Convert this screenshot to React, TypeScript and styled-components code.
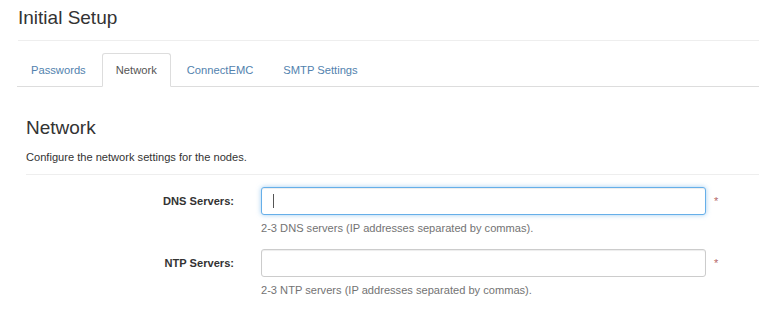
import styled, { createGlobalStyle, css } from "styled-components";

const GlobalStyle = createGlobalStyle`
  html, body {
    margin: 0;
    padding: 0;
    background: #fff;
  }
  body {
    font-family: "Liberation Sans", Arial, sans-serif;
    color: #333;
  }
`

const Page = styled.div`
  padding-left: 18px;
`

const Header = styled.div`
  padding-top: 7px;
  padding-bottom: 12px;
  border-bottom: 1px solid #eee;
`

const Title = styled.h1`
  margin: 0;
  font-size: 19px;
  line-height: 21px;
  font-weight: normal;
  color: #333;
`

const Tabs = styled.ul`
  display: flex;
  list-style: none;
  margin: 12px 0 0 -1px;
  padding: 0;
  border-bottom: 1px solid #ddd;
`

const Tab = styled.li<{ $active?: boolean }>`
  margin-right: 2px;
  margin-bottom: -1px;
  padding: 8px 13px;
  font-size: 11.2px;
  line-height: 16px;
  border: 1px solid transparent;
  border-radius: 3px 3px 0 0;
  color: #5282ae;
  ${(p) =>
    p.$active &&
    css`
      color: #555;
      background: #fff;
      border-color: #ddd #ddd transparent;
    `}
`

const Panel = styled.div`
  padding-left: 8px;
`

const Legend = styled.h2`
  margin: 30px 0 0;
  font-size: 19px;
  line-height: 21px;
  font-weight: normal;
  color: #333;
`

const Description = styled.p`
  margin: 11px 0 0;
  padding-bottom: 9px;
  font-size: 11.1px;
  line-height: 16px;
  border-bottom: 1px solid #eee;
`

const Form = styled.div`
  display: flex;
  flex-direction: column;
  gap: 13px;
  padding-top: 12px;
`

const Row = styled.div`
  display: grid;
  grid-template-columns: 208px 445px auto;
  column-gap: 27px;
  align-items: center;
`

const Label = styled.label`
  justify-self: end;
  font-size: 11.1px;
  font-weight: bold;
  color: #333;
`

const FieldWrap = styled.div<{ $focused?: boolean }>`
  position: relative;
  ${(p) =>
    p.$focused &&
    css`
      &::after {
        content: "";
        position: absolute;
        left: 12px;
        top: 7px;
        width: 1px;
        height: 14px;
        background: #555;
      }
    `}
`

const Input = styled.input<{ $focused?: boolean }>`
  display: block;
  box-sizing: border-box;
  width: 100%;
  height: 28px;
  padding: 4px 10px;
  font-family: "Liberation Sans", Arial, sans-serif;
  font-size: 11.1px;
  color: #555;
  background: #fff;
  border: 1px solid #ccc;
  border-radius: 3px;
  box-shadow: inset 0 1px 1px rgba(0, 0, 0, 0.075);
  outline: none;
  ${(p) =>
    p.$focused &&
    css`
      border-color: #66afe9;
      box-shadow: inset 0 1px 1px rgba(0, 0, 0, 0.075), 0 0 5px rgba(102, 175, 233, 0.6);
    `}
`

const Required = styled.span`
  margin-left: -19px;
  font-size: 11px;
  color: #b56868;
`

const Help = styled.div`
  grid-column: 2 / 4;
  margin-top: 5px;
  font-size: 11.1px;
  line-height: 16px;
  color: #737373;
`

const fields = [
  { label: "DNS Servers:", help: "2-3 DNS servers (IP addresses separated by commas).", focused: true },
  { label: "NTP Servers:", help: "2-3 NTP servers (IP addresses separated by commas).", focused: false },
]

export default function App() {
  return (
    <>
      <GlobalStyle />
      <Page>
        <Header>
          <Title>Initial Setup</Title>
        </Header>
        <Tabs>
          <Tab>Passwords</Tab>
          <Tab $active>Network</Tab>
          <Tab>ConnectEMC</Tab>
          <Tab>SMTP Settings</Tab>
        </Tabs>
        <Panel>
          <Legend>Network</Legend>
          <Description>Configure the network settings for the nodes.</Description>
          <Form>
            {fields.map((f) => (
              <Row key={f.label}>
                <Label>{f.label}</Label>
                <FieldWrap $focused={f.focused}>
                  <Input $focused={f.focused} />
                </FieldWrap>
                <Required>*</Required>
                <div />
                <Help>{f.help}</Help>
              </Row>
            ))}
          </Form>
        </Panel>
      </Page>
    </>
  )
}
